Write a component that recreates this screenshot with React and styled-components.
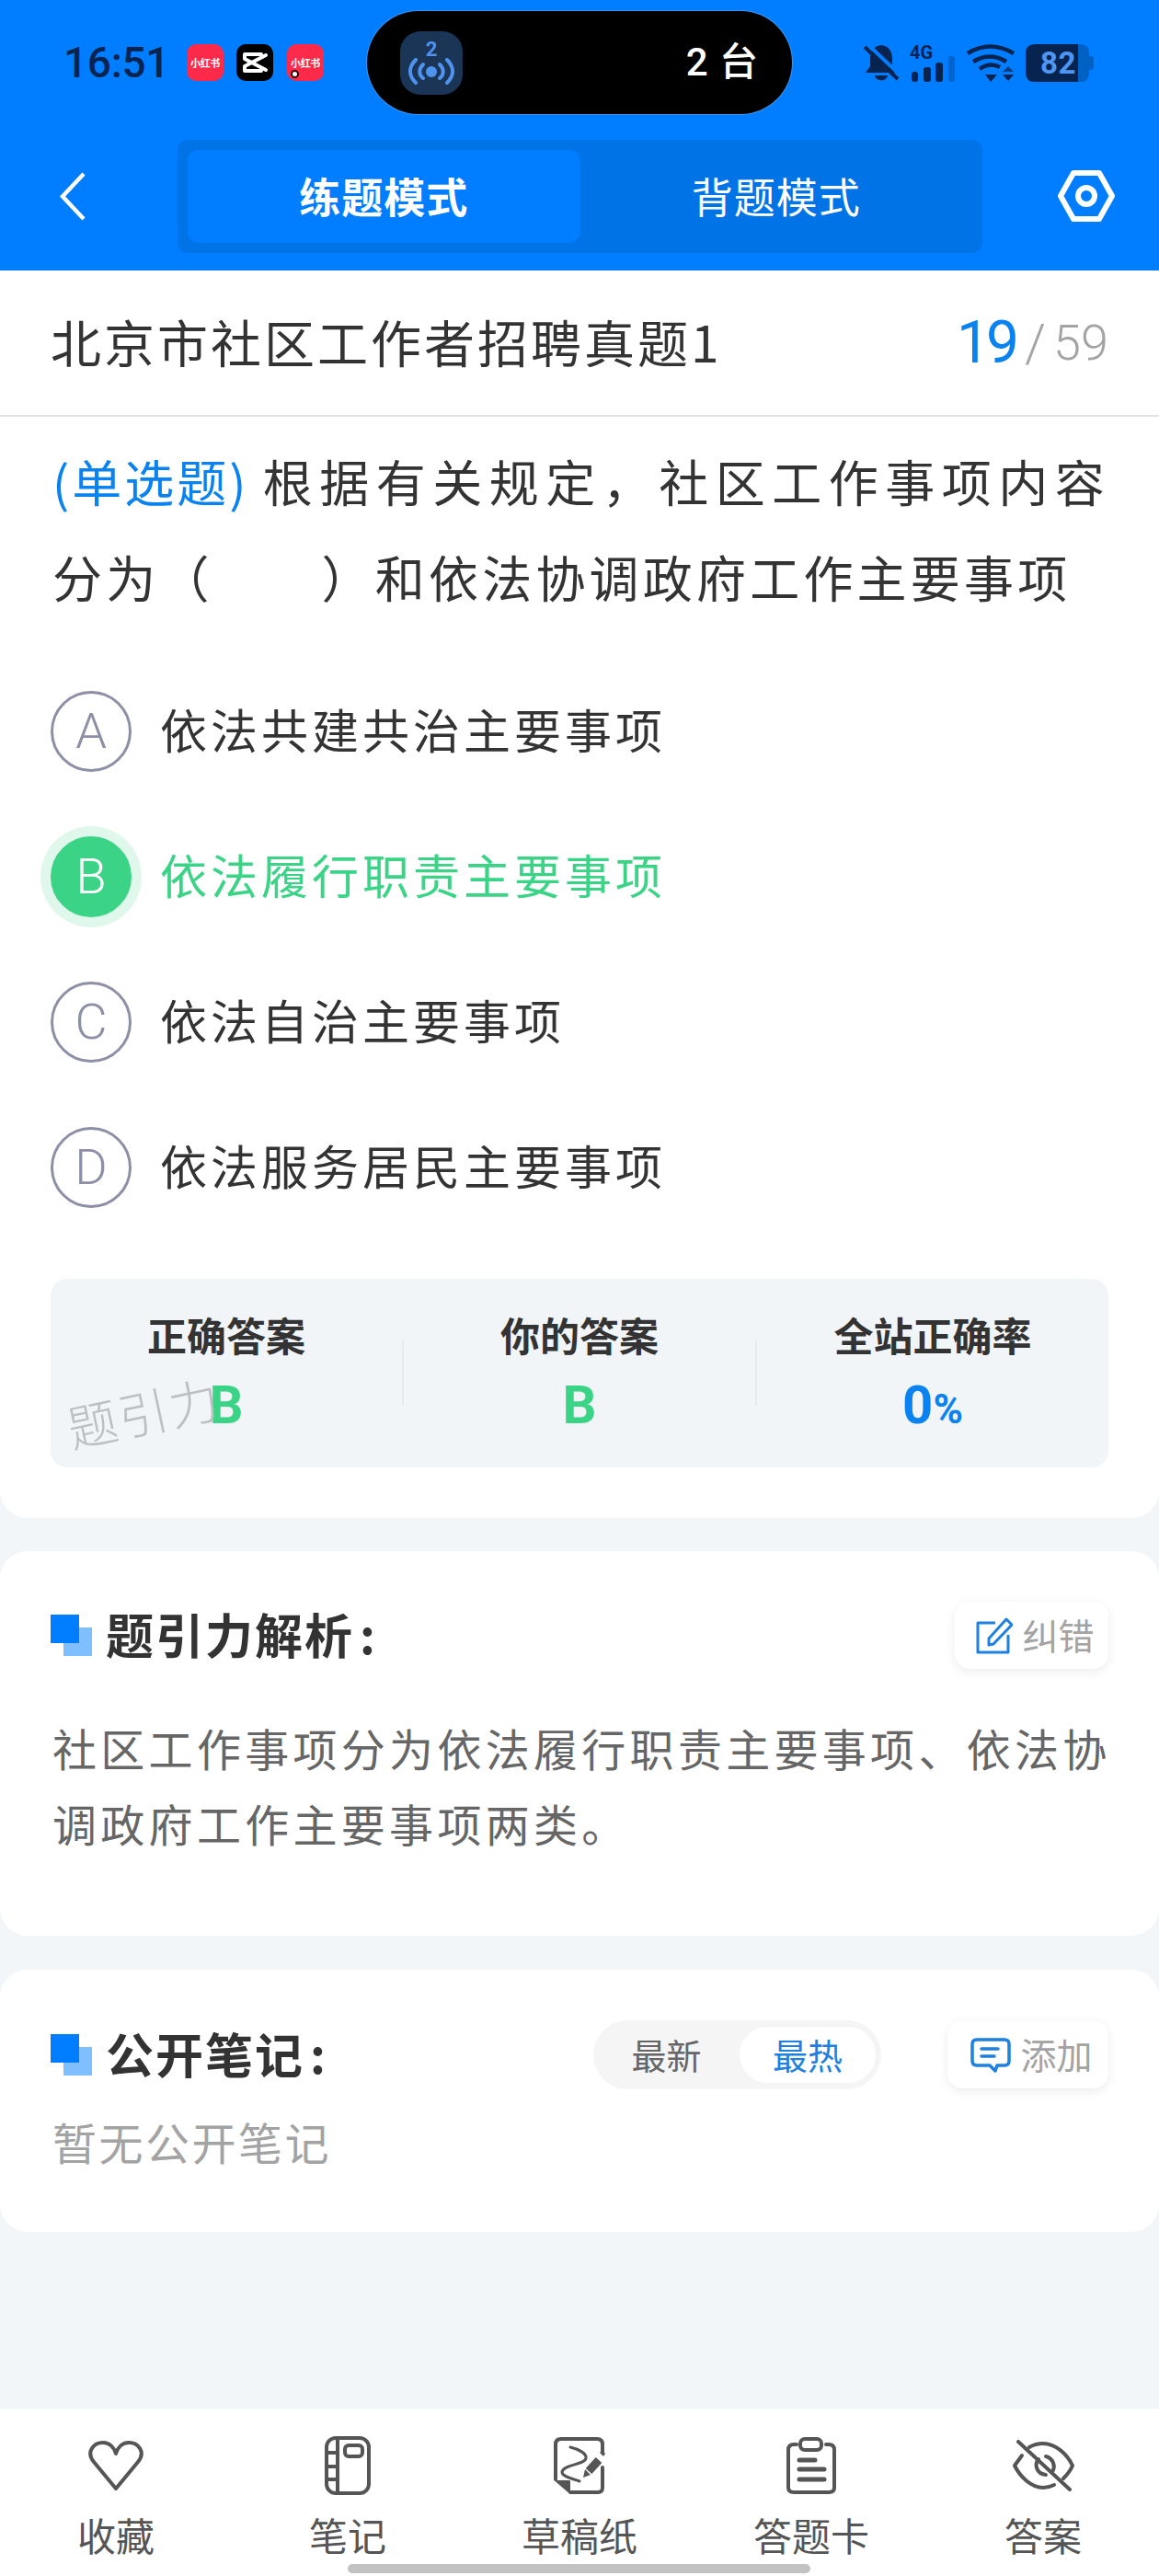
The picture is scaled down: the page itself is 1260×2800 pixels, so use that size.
import React from 'react';
import styled, { createGlobalStyle } from 'styled-components';

const Global = createGlobalStyle`
  html, body { margin: 0; padding: 0; background: #f2f6f9; }
  * { box-sizing: border-box; }
  body { font-family: "Noto Sans CJK SC", "Noto Sans", sans-serif; }
`;

const Page = styled.div`
  width: 1260px; height: 2800px; display: flex; flex-direction: column;
  background: #f2f6f9; overflow: hidden; color: #333;
`;
const Header = styled.header`
  height: 294px; background: #007eff; display: flex; flex-direction: column; flex: none;
`;
const StatusBar = styled.div`
  height: 136px; display: flex; align-items: center; color: #06244f;
`;
const StatusLeft = styled.div`
  width: 399px; padding-left: 69px; display: flex; align-items: center;
`;
const Time = styled.span`
  font: 500 46px/50px Roboto, sans-serif; width: 134px; letter-spacing: -0.3px;
`;
const AppIcon = styled.span`
  position: relative; width: 40px; height: 40px; border-radius: 10px; margin-right: ${p => p.$gap || 0}px;
  background: ${p => p.$dark ? '#000' : '#ff2a4a'}; display: flex; align-items: center; justify-content: center;
  color: #fff; font-size: 11px; font-weight: 700; letter-spacing: -0.4px; white-space: nowrap; flex: none;
`;
const AppDot = styled.i`
  position: absolute; left: 4px; bottom: 3px; width: 9px; height: 9px; border-radius: 50%;
  background: #fff; border: 2.5px solid #300;
`;
const Island = styled.div`
  width: 462px; height: 112px; border-radius: 56px; background: #000; display: flex; align-items: center;
  justify-content: space-between; padding: 0 37px 0 36px; box-shadow: 0 0 0 1px rgba(160,190,230,.35); flex: none;
`;
const CastTile = styled.div`
  width: 68px; height: 69px; border-radius: 22px; background: #1a3556; display: flex; flex-direction: column;
  align-items: center; justify-content: center; color: #4f93ee; font: 700 22px/19px Roboto, sans-serif;
`;
const IslandText = styled.span`
  color: #fff; font: 500 42px/50px Roboto, "Noto Sans CJK SC", sans-serif; word-spacing: 2px;
`;
const StatusRight = styled.div`
  margin-left: 78px; display: flex; align-items: center; gap: 12px;
`;
const Battery = styled.div`
  position: relative; width: 74px; height: 41px; display: flex; align-items: center; padding-left: 16px;
  color: #4f96f2; font: 700 33px/41px Roboto, sans-serif; letter-spacing: .5px;
`;
const BatteryBody = styled.svg`
  position: absolute; inset: 0;
`;
const BatteryText = styled.span`
  position: relative;
`;
const Nav = styled.nav`
  height: 158px; display: flex; align-items: center; padding: 0 48px 4px 64px;
`;
const Back = styled.svg`
  width: 30px; height: 53px; margin-right: 99px; flex: none;
`;
const Tabs = styled.div`
  width: 875px; height: 123px; padding: 11px; border-radius: 12px; background: #0073e6; display: flex; flex: none;
`;
const Tab = styled.div`
  flex: 1; border-radius: 12px; display: flex; align-items: center; justify-content: center;
  background: ${p => p.$active ? '#007eff' : 'transparent'}; color: #fff;
  font-size: 45px; letter-spacing: 1px; font-weight: ${p => p.$active ? 700 : 400}; line-height: 60px;
`;
const HexIcon = styled.svg`
  width: 62px; height: 56px; margin-left: auto; flex: none;
`;
const TitleBar = styled.div`
  height: 159px; background: #fff; border-bottom: 2px solid #e2e2e2; flex: none;
  display: flex; align-items: center; justify-content: space-between; padding: 0 55px;
`;
const PaperTitle = styled.h1`
  margin: 0; padding-bottom: 6px; font-size: 55px; font-weight: 400; line-height: 70px; letter-spacing: 3px; color: #333;
`;
const Counter = styled.div`
  display: flex; align-items: center; font-family: Roboto, sans-serif; color: #a3a3a3;
`;
const Current = styled.span`
  font-size: 64px; line-height: 70px; color: #0a82f0; letter-spacing: -4px; margin-right: 10px;
`;
const Slash = styled.span`
  font-size: 58px; line-height: 70px; font-weight: 300; margin-right: 8px;
`;
const Total = styled.span`
  font-size: 54px; line-height: 70px; font-weight: 300;
`;
const QuestionCard = styled.section`
  background: #fff; border-radius: 0 0 30px 30px; padding: 18px 55px 55px; flex: none;
`;
const Question = styled.div`
  padding-left: 2px; font-size: 54px; line-height: 104px; letter-spacing: 4.2px; color: #333;
`;
const QuestionLine = styled.div`
  white-space: nowrap; text-align-last: ${p => p.$fill ? 'justify' : 'auto'};
`;
const QType = styled.span`
  display: inline-block; color: #0a82f0; letter-spacing: 3px; margin-right: 12px; text-align-last: left;
`;
const QuestionBlank = styled.span`
  display: inline-block; width: 118px;
`;
const Options = styled.div`
  margin-top: 37px; display: flex; flex-direction: column;
`;
const Option = styled.div`
  height: 158px; display: flex; align-items: center; gap: 31px;
  font-size: 51px; letter-spacing: 4px; color: ${p => p.$selected ? '#3bd487' : '#333'};
`;
const OptionText = styled.span`
  padding-bottom: 6px;
`;
const OptionMark = styled.span`
  width: 88px; height: 88px; border-radius: 50%; flex: none; display: flex; align-items: center; justify-content: center;
  font: 300 54px/1 Roboto, sans-serif; letter-spacing: 0;
  color: ${p => p.$selected ? '#fff' : '#8c8fa6'};
  border: 3px solid ${p => p.$selected ? '#3bd487' : '#8c8fa6'};
  background: ${p => p.$selected ? '#3bd487' : 'transparent'};
  box-shadow: ${p => p.$selected ? '0 0 0 11px #e0f8ec' : 'none'};
`;
const Stats = styled.div`
  position: relative; margin-top: 42px; height: 205px; background: #f1f5f8; border-radius: 18px; display: flex;
`;
const StatCol = styled.div`
  flex: 1; display: flex; flex-direction: column; align-items: center; padding-top: 35px;
`;
const StatLabel = styled.div`
  font-size: 43px; font-weight: 700; line-height: 50px; color: #333;
`;
const StatValue = styled.div`
  margin-top: 19px; font: 700 58px/66px Roboto, sans-serif; color: ${p => p.$blue ? '#0a82f0' : '#3bd487'};
`;
const StatUnit = styled.span`
  font-size: 44px;
`;
const StatDivider = styled.i`
  width: 2px; height: 71px; align-self: center; background: #e6ebef; flex: none;
`;
const Watermark = styled.div`
  position: absolute; left: 17px; top: 109px; font-size: 54px; font-weight: 300; line-height: 70px; letter-spacing: 2px;
  color: #bcbec0; transform: rotate(-12deg); white-space: nowrap;
`;
const Card = styled.section`
  margin-top: ${p => p.$top}px; background: #fff; border-radius: 30px; padding: 55px 55px ${p => p.$bottom}px; flex: none;
`;
const CardHead = styled.div`
  display: flex; align-items: center; height: ${p => p.$h}px;
`;
const SectionTitle = styled.h2`
  margin: 0 0 0 15px; padding-bottom: 4px; font-size: 52px; font-weight: 700; line-height: 60px; letter-spacing: 2px; color: #333;
`;
const Colon = styled.span`
  margin-left: 6px;
`;
const HeadRight = styled.div`
  margin-left: auto; display: flex; align-items: center; gap: 72px;
`;
const ActionButton = styled.div`
  height: 73px; width: ${p => p.$w}px; border-radius: 16px; background: #fff; box-shadow: 0 3px 12px rgba(0,0,0,.08);
  display: flex; align-items: center; justify-content: center; gap: 10px; padding: 0 0 0 8px; color: #a3a3a3;
  font-size: 39px; line-height: 50px;
`;
const ActionText = styled.span`
  padding-bottom: 4px;
`;
const Explain = styled.p`
  margin: 44px -12px 0 0; padding-left: 2px; font-size: 48px; line-height: 82px; letter-spacing: 4.3px; color: #666;
`;
const Sort = styled.div`
  width: 313px; height: 75px; border-radius: 38px; background: #f5f5f5; padding: 7px 6px 4px 0; display: flex; font-size: 38px;
`;
const SortItem = styled.div`
  display: flex; align-items: center; justify-content: center; border-radius: 32px; height: 61px; padding-bottom: 3px;
  width: ${p => p.$active ? 148 : 159}px; background: ${p => p.$active ? '#fff' : 'transparent'};
  color: ${p => p.$active ? '#1e80e0' : '#666'};
`;
const EmptyNote = styled.div`
  margin-top: 26px; padding: 0 0 3px 2px; font-size: 48px; line-height: 60px; letter-spacing: 2.5px; color: #a3a3a3;
`;
const BottomBar = styled.footer`
  position: relative; margin-top: auto; height: 182px; background: #fff; display: flex; flex: none;
`;
const BarItem = styled.div`
  flex: 1; display: flex; flex-direction: column; align-items: center; padding-top: 29px; color: #555;
`;
const BarIcon = styled.div`
  height: 66px; display: flex; align-items: center; justify-content: center;
`;
const BarLabel = styled.div`
  margin-top: 14px; font-size: 42px; line-height: 56px;
`;
const HomeBar = styled.i`
  position: absolute; left: 378px; bottom: 3px; width: 503px; height: 10px; border-radius: 5px; background: #c2c2c2;
`;

const Squares = () => (
  <svg width="45" height="45" viewBox="0 0 45 45">
    <rect x="14" y="14" width="31" height="31" fill="#80bfff" />
    <rect x="0" y="0" width="31" height="31" fill="#007eff" />
  </svg>
);
const st = { fill: 'none', stroke: '#555', strokeWidth: 4, strokeLinecap: 'round', strokeLinejoin: 'round' };

const Heart = () => (
  <svg width="64" height="56" viewBox="0 0 64 56">
    <path {...st} d="M32 53 L8 24 C-1 13 8 3 18 3 C25 3 30 8 32 15 C34 8 39 3 46 3 C56 3 65 13 56 24 Z" />
  </svg>
);
const Notebook = () => (
  <svg width="50" height="64" viewBox="0 0 50 64">
    <g {...st}>
      <rect x="2" y="2" width="46" height="60" rx="10" />
      <path d="M14 2 V62 M2 18 H14 M2 33 H14 M2 47 H14" />
      <rect x="22" y="10" width="19" height="12" rx="4" />
    </g>
  </svg>
);
const Draft = () => (
  <svg width="56" height="63" viewBox="0 0 56 63">
    <g {...st}>
      <path d="M2 46 V8 Q2 2 8 2 H47 Q53 2 53 8 V16 M53 33 V55 Q53 60 48 60 H18" />
      <path strokeWidth="3" d="M18 11 C27 13 36 18 35 23 C34 30 10 30 9 38 C9 43 20 45 28 48" />
    </g>
    <path fill="#555" stroke="#555" strokeWidth="2" strokeLinejoin="round" d="M3 48 H17 V60 Z" />
    <path fill="none" stroke="#555" strokeWidth="9" d="M38 37 L49 25" />
    <path fill="#555" d="M32 44 L34 35 L40 41 Z M50 17 L53 14 L56 18 L54 21 Z" />
  </svg>
);
const Clipboard = () => (
  <svg width="54" height="63" viewBox="0 0 54 63">
    <g {...st}>
      <path d="M11 8 H8 Q2 8 2 14 V55 Q2 60 8 60 H46 Q52 60 52 55 V14 Q52 8 46 8 H43" />
      <rect x="15" y="2" width="23" height="12" rx="5" />
      <path d="M14 25 H31 M14 35 H41 M14 46 H41" strokeWidth="5" />
    </g>
  </svg>
);
const EyeOff = () => (
  <svg width="68" height="56" viewBox="0 0 68 56">
    <g {...st}>
      <path d="M11 17 L3 28 C9 40 21 52 34 52 C38 52 42 51 46 49" />
      <path d="M19 8 C24 5 29 4 34 4 C47 4 60 15 66 28 C64 33 60 38 56 42" />
      <path d="M29 21 C24 27 27 37 37 38" />
      <path d="M37 18 C45 20 47 28 45 33" />
      <path d="M7 2 L63 54" />
    </g>
  </svg>
);
const Edit = () => (
  <svg width="40" height="40" viewBox="0 0 40 40">
    <g fill="none" stroke="#1e80e0" strokeWidth="3" strokeLinejoin="round">
      <path d="M21 6 H2 V38 H35 V19" />
      <path d="M14 23 L33 2 L39 8 L19 29 L14 30 Z" />
    </g>
  </svg>
);
const Comment = () => (
  <svg width="44" height="38" viewBox="0 0 44 38">
    <g fill="none" stroke="#1e80e0" strokeWidth="3.5" strokeLinecap="round" strokeLinejoin="round">
      <path d="M7 2 H37 Q42 2 42 7 V25 Q42 30 37 30 H29 L27 36 L21 30 H7 Q2 30 2 25 V7 Q2 2 7 2 Z" />
      <path d="M12 12 H30 M12 20 H26" />
    </g>
  </svg>
);
const CapCut = () => (
  <svg width="30" height="24" viewBox="0 0 30 24">
    <g fill="none" stroke="#fff" strokeWidth="4" strokeLinejoin="round" strokeLinecap="round">
      <path d="M22 3 H4 V8 L27 20" />
      <path d="M22 21 H4 V16 L27 4" />
    </g>
  </svg>
);
const Cast = () => (
  <svg width="50" height="29" viewBox="0 0 50 29">
    <g fill="none" stroke="#4f93ee" strokeWidth="4" strokeLinecap="round">
      <path d="M8 2 C0 10 0 19 8 27 M42 2 C50 10 50 19 42 27" />
      <path d="M16 7 C11 12 11 18 16 22 M34 7 C39 12 39 18 34 22" />
    </g>
    <circle cx="25" cy="15" r="6" fill="#4f93ee" />
  </svg>
);
const dark = '#06244f';
const Bell = () => (
  <svg width="38" height="41" viewBox="0 0 38 41">
    <path fill={dark} d="M19 1 C10 2 7 9 7 16 L7 24 L2 31 L36 31 L31 24 L31 16 C31 9 28 2 19 1 Z" />
    <path fill={dark} d="M12 34 H26 C25 41 13 41 12 34 Z" />
    <path stroke="#007eff" strokeWidth="4" d="M4 0 L38 32" />
    <path stroke={dark} strokeWidth="4" d="M1 3 L37 38" />
  </svg>
);
const Wifi = () => (
  <svg width="52" height="41" viewBox="0 0 52 41">
    <g fill="none" stroke={dark} strokeWidth="4.5">
      <path d="M1 10 Q25 -5 51 10" />
      <path d="M7 19 Q25 8 43 19" />
      <path d="M14 27 Q25 19 36 25" />
    </g>
    <path fill={dark} d="M20 33 H33 L26 41 Z M39 33 H51 L45 40 Z" />
    <path fill={dark} opacity=".7" d="M39 30 L45 24 L51 30 Z" />
  </svg>
);
const SignalIcon = () => (
  <svg width="50" height="41" viewBox="0 0 50 41">
    <text x="0" y="16" fontFamily="Roboto, sans-serif" fontWeight="700" fontSize="20" fill={dark}>4G</text>
    <g fill={dark}>
      <rect x="2" y="30" width="7" height="11" rx="3" />
      <rect x="15" y="25" width="8" height="16" rx="3" />
      <rect x="28" y="20" width="8" height="21" rx="3" />
      <rect x="42" y="13" width="7" height="28" rx="3" opacity=".28" />
    </g>
  </svg>
);
const Col = ({ label, children }) => (
  <StatCol>
    <StatLabel>{label}</StatLabel>
    {children}
  </StatCol>
);

const OPTIONS = [['A', '依法共建共治主要事项'], ['B', '依法履行职责主要事项'], ['C', '依法自治主要事项'], ['D', '依法服务居民主要事项']];
const BAR = [['收藏', Heart], ['笔记', Notebook], ['草稿纸', Draft], ['答题卡', Clipboard], ['答案', EyeOff]];

export default function App() {
  return (
    <Page>
      <Global />
      <Header>
        <StatusBar>
          <StatusLeft>
            <Time>16:51</Time>
            <AppIcon $gap={14}>小红书</AppIcon>
            <AppIcon $gap={15} $dark><CapCut /></AppIcon>
            <AppIcon>小红书<AppDot /></AppIcon>
          </StatusLeft>
          <Island>
            <CastTile>2<Cast /></CastTile>
            <IslandText>2 台</IslandText>
          </Island>
          <StatusRight>
            <Bell />
            <SignalIcon />
            <Wifi />
            <Battery>
              <BatteryBody width="74" height="41" viewBox="0 0 74 41">
                <path fill="#0061c4" d="M50 0 H60 Q69 0 69 10 V13 H71 Q74 13 74 16 V25 Q74 28 71 28 H69 V31 Q69 41 60 41 H50 Z" />
                <path fill={dark} d="M10 0 H57 V41 H10 Q0 41 0 31 V10 Q0 0 10 0 Z" />
              </BatteryBody>
              <BatteryText>82</BatteryText>
            </Battery>
          </StatusRight>
        </StatusBar>
        <Nav>
          <Back viewBox="0 0 30 53">
            <path d="M27 2 L4 26.5 L27 51" fill="none" stroke="#fff" strokeWidth="4.5" />
          </Back>
          <Tabs>
            <Tab $active>练题模式</Tab>
            <Tab>背题模式</Tab>
          </Tabs>
          <HexIcon viewBox="0 0 62 56">
            <path d="M17 3 H45 L59 28 L45 53 H17 L3 28 Z" fill="none" stroke="#fff" strokeWidth="6" strokeLinejoin="round" />
            <circle cx="31" cy="28" r="9" fill="none" stroke="#fff" strokeWidth="6" />
          </HexIcon>
        </Nav>
      </Header>
      <TitleBar>
        <PaperTitle>北京市社区工作者招聘真题1</PaperTitle>
        <Counter><Current>19</Current><Slash>/</Slash><Total>59</Total></Counter>
      </TitleBar>
      <QuestionCard>
        <Question>
          <QuestionLine $fill><QType>(单选题)</QType>根据有关规定，社区工作事项内容</QuestionLine>
          <QuestionLine>分为（<QuestionBlank />）和依法协调政府工作主要事项</QuestionLine>
        </Question>
        <Options>
          {OPTIONS.map(([k, t]) => (
            <Option key={k} $selected={k === 'B'}>
              <OptionMark $selected={k === 'B'}>{k}</OptionMark>
              <OptionText>{t}</OptionText>
            </Option>
          ))}
        </Options>
        <Stats>
          <Col label="正确答案"><StatValue>B</StatValue></Col>
          <StatDivider />
          <Col label="你的答案"><StatValue>B</StatValue></Col>
          <StatDivider />
          <Col label="全站正确率"><StatValue $blue>0<StatUnit>%</StatUnit></StatValue></Col>
          <Watermark>题引力</Watermark>
        </Stats>
      </QuestionCard>
      <Card $top={36} $bottom={82}>
        <CardHead $h={73}>
          <Squares />
          <SectionTitle>题引力解析<Colon>:</Colon></SectionTitle>
          <HeadRight>
            <ActionButton $w={167}><Edit /><ActionText>纠错</ActionText></ActionButton>
          </HeadRight>
        </CardHead>
        <Explain>社区工作事项分为依法履行职责主要事项、依法协调政府工作主要事项两类。</Explain>
      </Card>
      <Card $top={37} $bottom={66}>
        <CardHead $h={75}>
          <Squares />
          <SectionTitle>公开笔记<Colon>:</Colon></SectionTitle>
          <HeadRight>
            <Sort>
              <SortItem>最新</SortItem>
              <SortItem $active>最热</SortItem>
            </Sort>
            <ActionButton $w={175}><Comment /><ActionText>添加</ActionText></ActionButton>
          </HeadRight>
        </CardHead>
        <EmptyNote>暂无公开笔记</EmptyNote>
      </Card>
      <BottomBar>
        {BAR.map(([label, Icon]) => (
          <BarItem key={label}>
            <BarIcon><Icon /></BarIcon>
            <BarLabel>{label}</BarLabel>
          </BarItem>
        ))}
        <HomeBar />
      </BottomBar>
    </Page>
  );
}
